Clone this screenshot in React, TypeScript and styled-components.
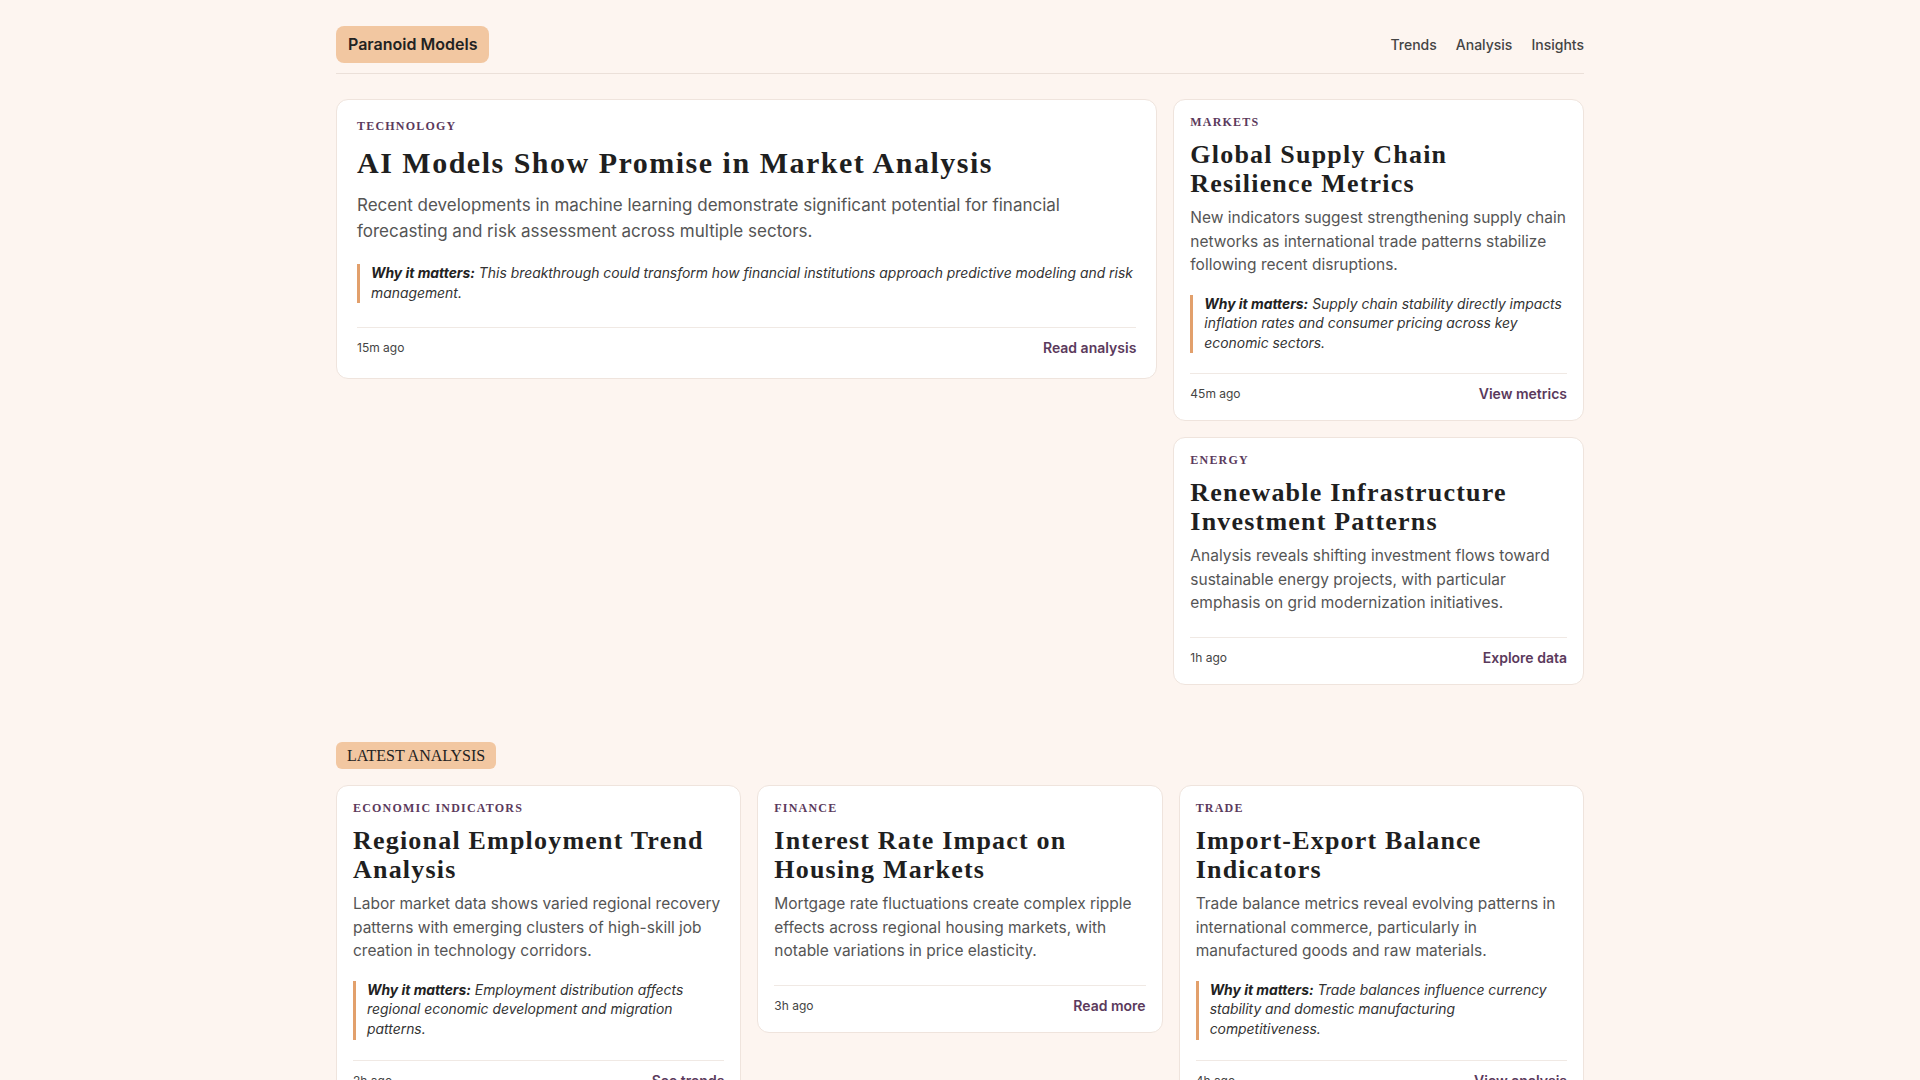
import React from "react";
import styled, { createGlobalStyle, css } from "styled-components";

const GlobalStyle = createGlobalStyle`
  *, *::before, *::after { box-sizing: border-box; }
  html, body { margin: 0; padding: 0; }
  body {
    background: #fdf5f0;
    font-family: Inter, "Noto Sans", "Liberation Sans", sans-serif;
    color: #222;
    -webkit-font-smoothing: antialiased;
  }
`;

const serif = `"Liberation Serif", "DejaVu Serif", serif`;

const Page = styled.div`
  max-width: 1280px;
  margin: 0 auto;
  padding: 0 16px 48px;
`;

const Header = styled.header`
  display: flex;
  align-items: center;
  justify-content: space-between;
  padding: 26px 0 10px;
  border-bottom: 1px solid #ebe0d9;
`;

const Logo = styled.div`
  background: #f2c7a1;
  color: #222;
  font-size: 16px;
  font-weight: 600;
  line-height: 23px;
  padding: 7px 12px;
  border-radius: 8px;
`;

const Nav = styled.nav`
  display: flex;
  gap: 19px;
`;

const NavLink = styled.a`
  font-size: 14px;
  font-weight: 500;
  color: #444;
  text-decoration: none;
  cursor: pointer;
`;

const FeatureGrid = styled.section`
  display: grid;
  grid-template-columns: 2fr 1fr;
  gap: 16px;
  margin-top: 25px;
  align-items: start;
`;

const SideColumn = styled.div`
  display: flex;
  flex-direction: column;
  gap: 16px;
`;

const Card = styled.article<{ $feature?: boolean }>`
  background: #fff;
  border: 1px solid #efe4dd;
  border-radius: 12px;
  padding: ${(p) => (p.$feature ? "20px" : "16px")};
`;

const Category = styled.div`
  font-family: ${serif};
  font-size: 12px;
  font-weight: 700;
  line-height: 12px;
  letter-spacing: 0.1em;
  text-transform: uppercase;
  color: #5b3a5c;
  margin-bottom: 13px;
`;

const Title = styled.h2<{ $feature?: boolean }>`
  font-family: ${serif};
  font-weight: 700;
  color: #1f1f1f;
  margin: 0;
  ${(p) =>
    p.$feature
      ? css`
          font-size: 30px;
          line-height: 36px;
          letter-spacing: 1.5px;
          margin-bottom: 12px;
        `
      : css`
          font-size: 26px;
          line-height: 28.5px;
          letter-spacing: 1.2px;
          margin-bottom: 8px;
        `}
`;

const Summary = styled.p<{ $feature?: boolean }>`
  margin: 0;
  color: #555;
  ${(p) =>
    p.$feature
      ? css`
          font-size: 17px;
          line-height: 25.5px;
          margin-bottom: 20px;
        `
      : css`
          font-size: 15.5px;
          line-height: 23.5px;
          margin-bottom: 18px;
        `}
`;

const Note = styled.blockquote<{ $feature?: boolean }>`
  margin: 0 0 ${(p) => (p.$feature ? "24px" : "20px")};
  padding-left: 11px;
  border-left: 3px solid #e2a06c;
  font-size: 13.9px;
  line-height: 19.6px;
  font-style: italic;
  color: #333;
`;

const NoteLabel = styled.strong`
  font-weight: 700;
  color: #222;
`;

const Footer = styled.footer`
  display: flex;
  align-items: center;
  justify-content: space-between;
  border-top: 1px solid #f0e9e4;
  padding-top: 10px;

  ${Summary} + & {
    margin-top: 22px;
  }
`;

const Time = styled.span`
  font-size: 12px;
  line-height: 20px;
  color: #444;
`;

const ActionLink = styled.a`
  font-size: 14px;
  line-height: 20px;
  font-weight: 600;
  color: #5b3a5c;
  text-decoration: none;
  cursor: pointer;
`;

const LatestSection = styled.section`
  margin-top: 57px;
`;

const SectionBadge = styled.h3`
  display: inline-block;
  margin: 0;
  background: #f2c7a1;
  color: #222;
  font-family: ${serif};
  font-weight: 400;
  font-size: 16px;
  line-height: 19.5px;
  text-transform: uppercase;
  padding: 4px 11px;
  border-radius: 6px;
`;

const LatestGrid = styled.div`
  display: grid;
  grid-template-columns: repeat(3, 1fr);
  gap: 16px;
  margin-top: 16px;
  align-items: start;
`;

type Story = {
  category: string;
  title: string;
  summary: string;
  why?: string;
  time: string;
  action: string;
};

const featured: Story = {
  category: "Technology",
  title: "AI Models Show Promise in Market Analysis",
  summary:
    "Recent developments in machine learning demonstrate significant potential for financial forecasting and risk assessment across multiple sectors.",
  why: "This breakthrough could transform how financial institutions approach predictive modeling and risk management.",
  time: "15m ago",
  action: "Read analysis",
};

const side: Story[] = [
  {
    category: "Markets",
    title: "Global Supply Chain Resilience Metrics",
    summary:
      "New indicators suggest strengthening supply chain networks as international trade patterns stabilize following recent disruptions.",
    why: "Supply chain stability directly impacts inflation rates and consumer pricing across key economic sectors.",
    time: "45m ago",
    action: "View metrics",
  },
  {
    category: "Energy",
    title: "Renewable Infrastructure Investment Patterns",
    summary:
      "Analysis reveals shifting investment flows toward sustainable energy projects, with particular emphasis on grid modernization initiatives.",
    time: "1h ago",
    action: "Explore data",
  },
];

const latest: Story[] = [
  {
    category: "Economic Indicators",
    title: "Regional Employment Trend Analysis",
    summary:
      "Labor market data shows varied regional recovery patterns with emerging clusters of high-skill job creation in technology corridors.",
    why: "Employment distribution affects regional economic development and migration patterns.",
    time: "2h ago",
    action: "See trends",
  },
  {
    category: "Finance",
    title: "Interest Rate Impact on Housing Markets",
    summary:
      "Mortgage rate fluctuations create complex ripple effects across regional housing markets, with notable variations in price elasticity.",
    time: "3h ago",
    action: "Read more",
  },
  {
    category: "Trade",
    title: "Import-Export Balance Indicators",
    summary:
      "Trade balance metrics reveal evolving patterns in international commerce, particularly in manufactured goods and raw materials.",
    why: "Trade balances influence currency stability and domestic manufacturing competitiveness.",
    time: "4h ago",
    action: "View analysis",
  },
];

function StoryCard({ story, feature }: { story: Story; feature?: boolean }) {
  return (
    <Card $feature={feature}>
      <Category>{story.category}</Category>
      <Title $feature={feature}>{story.title}</Title>
      <Summary $feature={feature}>{story.summary}</Summary>
      {story.why && (
        <Note $feature={feature}>
          <NoteLabel>Why it matters:</NoteLabel> {story.why}
        </Note>
      )}
      <Footer>
        <Time>{story.time}</Time>
        <ActionLink>{story.action}</ActionLink>
      </Footer>
    </Card>
  );
}

export default function App() {
  return (
    <>
      <GlobalStyle />
      <Page>
        <Header>
          <Logo>Paranoid Models</Logo>
          <Nav>
            <NavLink>Trends</NavLink>
            <NavLink>Analysis</NavLink>
            <NavLink>Insights</NavLink>
          </Nav>
        </Header>
        <FeatureGrid>
          <StoryCard story={featured} feature />
          <SideColumn>
            {side.map((s) => (
              <StoryCard key={s.title} story={s} />
            ))}
          </SideColumn>
        </FeatureGrid>
        <LatestSection>
          <SectionBadge>Latest Analysis</SectionBadge>
          <LatestGrid>
            {latest.map((s) => (
              <StoryCard key={s.title} story={s} />
            ))}
          </LatestGrid>
        </LatestSection>
      </Page>
    </>
  );
}
